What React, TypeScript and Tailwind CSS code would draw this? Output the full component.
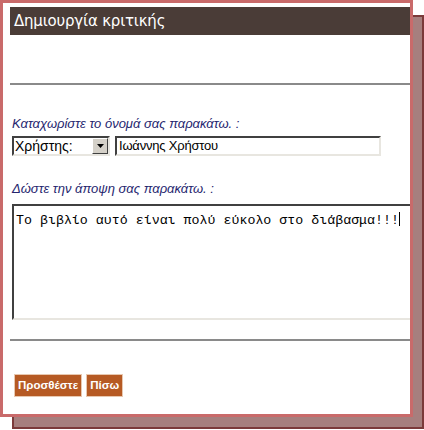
export default function App() {
  return (
    <div className="relative w-[424px] h-[430px] bg-white overflow-hidden">
      {/* σκιά πίσω από το πλαίσιο */}
      <div className="absolute left-[12px] top-[15px] w-[412px] h-[414px] bg-[#a67f7e] border-2 border-[#7b3a3a]" />

      <div className="relative w-[413px] h-[417px] bg-white border-[3px] border-[#c96a6a] overflow-hidden pl-[7px] pt-[4px]">
        <div className="h-[28px] bg-[#4a3c37] flex items-center pl-[4px]">
          <h1 className="text-white text-[15px] font-['DejaVu_Sans',sans-serif] tracking-[-0.2px]">Δημιουργία κριτικής</h1>
        </div>

        <div className="mt-[48px] h-[2px] bg-[#8a8a8a]" />

        <div className="pl-[2px] font-['Liberation_Sans',Arial,sans-serif]">
          <p className="mt-[31px] text-[13px] italic text-[#25256e] leading-[15px]">Καταχωρίστε το όνομά σας παρακάτω. :</p>

          <div className="mt-[5px] flex gap-[5px]">
            <div className="w-[98px] h-[20px] flex border-2 border-t-[#404040] border-l-[#404040] border-r-[#e8e6e0] border-b-[#e8e6e0] bg-white">
              <span className="flex-1 text-[14px] leading-[16px] pl-[1px]">Χρήστης:</span>
              <span className="w-[16px] h-[16px] bg-[#d4d0c8] border border-t-white border-l-white border-r-[#404040] border-b-[#404040] flex items-center justify-center">
                <svg width="7" height="4" viewBox="0 0 7 4"><path d="M0 0h7L3.5 4z" fill="#000" /></svg>
              </span>
            </div>
            <div className="w-[266px] h-[20px] border-2 border-t-[#404040] border-l-[#404040] border-r-[#e8e6e0] border-b-[#e8e6e0] bg-white text-[13px] leading-[16px] pl-[2px] tracking-[-0.2px]">
              Ιωάννης Χρήστου
            </div>
          </div>

          <p className="mt-[25px] text-[13px] italic text-[#25256e] leading-[15px]">Δώστε την άποψη σας παρακάτω. :</p>

          <div className="mt-[8px] w-[420px] h-[116px] border-2 border-t-[#404040] border-l-[#404040] border-r-[#e8e6e0] border-b-[#e8e6e0] bg-white pl-[2px] pt-[1px]">
            <span className="text-[13.3px] leading-[15px] font-['Liberation_Mono','Courier_New',monospace]">
              Το βιβλίο αυτό είναι πολύ εύκολο στο διάβασμα!!!
            </span>
            <span className="inline-block w-[1px] h-[14px] bg-black align-[-2px]" />
          </div>
        </div>

        <div className="mt-[19px] h-[2px] bg-[#8a8a8a]" />

        <div className="mt-[33px] pl-[4px] flex gap-[4px] font-['Liberation_Sans',Arial,sans-serif]">
          <button className="h-[23px] px-[3px] bg-[#b65a24] border border-[#e8c8b0] text-white text-[11.5px] font-bold">Προσθέστε</button>
          <button className="h-[23px] px-[3px] bg-[#b65a24] border border-[#e8c8b0] text-white text-[11.5px] font-bold">Πίσω</button>
        </div>
      </div>
    </div>
  );
}
